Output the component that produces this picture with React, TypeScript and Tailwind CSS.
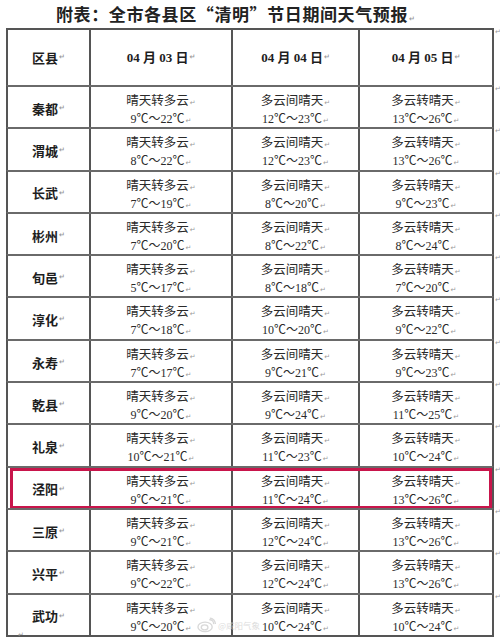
import React from "react";

type Row = { name: string; temps: [string, string, string] };

const rows: Row[] = [
	{ name: "秦都", temps: ["9℃～22℃", "12℃～23℃", "13℃～26℃"] },
	{ name: "渭城", temps: ["8℃～22℃", "12℃～23℃", "13℃～26℃"] },
	{ name: "长武", temps: ["7℃～19℃", "8℃～20℃", "9℃～23℃"] },
	{ name: "彬州", temps: ["7℃～20℃", "8℃～22℃", "8℃～24℃"] },
	{ name: "旬邑", temps: ["5℃～17℃", "8℃～18℃", "7℃～20℃"] },
	{ name: "淳化", temps: ["7℃～18℃", "10℃～20℃", "9℃～22℃"] },
	{ name: "永寿", temps: ["7℃～17℃", "9℃～21℃", "9℃～23℃"] },
	{ name: "乾县", temps: ["9℃～20℃", "9℃～24℃", "11℃～25℃"] },
	{ name: "礼泉", temps: ["10℃～21℃", "11℃～23℃", "10℃～24℃"] },
	{ name: "泾阳", temps: ["9℃～21℃", "11℃～24℃", "13℃～26℃"] },
	{ name: "三原", temps: ["9℃～21℃", "12℃～24℃", "13℃～26℃"] },
	{ name: "兴平", temps: ["9℃～22℃", "12℃～24℃", "13℃～26℃"] },
	{ name: "武功", temps: ["9℃～20℃", "10℃～24℃", "10℃～24℃"] },
];

const weather = ["晴天转多云", "多云间晴天", "多云转晴天"];
const dates = ["03", "04", "05"];

const cjk = "font-['Noto_Sans_CJK_SC',sans-serif]";
const serif = "font-['Liberation_Serif','Noto_Sans_CJK_SC',serif]";

function Mark() {
	return <span className="ml-[1px] text-[7px] leading-none text-[#9a9a9a] font-['DejaVu_Sans',sans-serif]">↵</span>;
}

function EdgeMark() {
	return (
		<div className="w-[6px] pl-[1px] pt-[1px] text-[7px] leading-none text-[#9a9a9a] font-['DejaVu_Sans',sans-serif]">
			↵
		</div>
	);
}

export default function App() {
	return (
		<div className="w-[500px] h-[641px] bg-white overflow-hidden relative text-[#1e1e1e]">
			<div className="h-[28px] flex items-center pl-[56px]">
				<h1 className={`${cjk} text-[17px] font-bold tracking-[0.6px] leading-none text-[#222]`}>
					附表：全市各县区“清明”节日期间天气预报
					<Mark />
				</h1>
			</div>

			<div className="ml-[6px] flex flex-col">
				<div className="flex">
					<div className="grid grid-cols-[81px_142px_127px_134px] h-[57px] border-2 border-b-0 border-[#555]">
						<div className={`${cjk} flex items-center justify-center text-[13px] font-bold`}>
							区县
							<Mark />
						</div>
						{dates.map((d) => (
							<div
								key={d}
								className={`${serif} flex items-center justify-center border-l-2 border-[#555] text-[13px] font-bold`}
							>
								04 月 {d} 日
								<Mark />
							</div>
						))}
					</div>
					<EdgeMark />
				</div>

				{rows.map((row, i) => (
					<div key={row.name} className="flex">
						<div
							className={`relative grid grid-cols-[81px_142px_127px_134px] h-[42.3px] border-x-2 border-t-2 border-x-[#555] border-t-[#6a6a6a] ${
								i === rows.length - 1 ? "border-b-2 border-b-[#555] h-[44.3px]" : ""
							}`}
						>
							<div className={`${cjk} flex items-center justify-center pt-[2px] text-[13px] font-bold`}>
								{row.name}
								<Mark />
							</div>
							{row.temps.map((t, j) => (
								<div
									key={j}
									className="flex flex-col items-center border-l-2 border-[#555] pt-[3px]"
								>
									<div className={`${cjk} text-[12.5px] leading-[20px] text-[#2a2a2a]`}>
										{weather[j]}
										<Mark />
									</div>
									<div className={`${serif} text-[12px] leading-[18px] text-[#2a2a2a]`}>
										{t}
										<Mark />
									</div>
								</div>
							))}
							{row.name === "泾阳" && (
								<div className="absolute left-[2px] right-0 top-[0px] h-[41px] border-[3px] border-[#c8154b]" />
							)}
						</div>
						<EdgeMark />
					</div>
				))}
			</div>

			<div className="absolute left-[18px] top-[632px] text-[7px] leading-none text-[#9a9a9a] font-['DejaVu_Sans',sans-serif]">
				↵
			</div>

			{/* faint weibo watermark */}
			<div className="absolute left-[197px] top-[617px] flex items-center gap-[2px] opacity-70">
				<svg width="19" height="16" viewBox="0 0 20 16" fill="none" stroke="#c9c9c9" strokeWidth="1.4">
					<ellipse cx="8.5" cy="10" rx="7.5" ry="5" />
					<ellipse cx="8" cy="10.5" rx="3.5" ry="2.6" />
					<path d="M13 2.5a4 4 0 0 1 4.5 4.5" />
					<path d="M13.5 0.8a6 6 0 0 1 5.8 6.2" />
				</svg>
				<span className={`${cjk} text-[8.5px] leading-none text-[#cfcfcf]`}>@咸阳气象</span>
			</div>
		</div>
	);
}
